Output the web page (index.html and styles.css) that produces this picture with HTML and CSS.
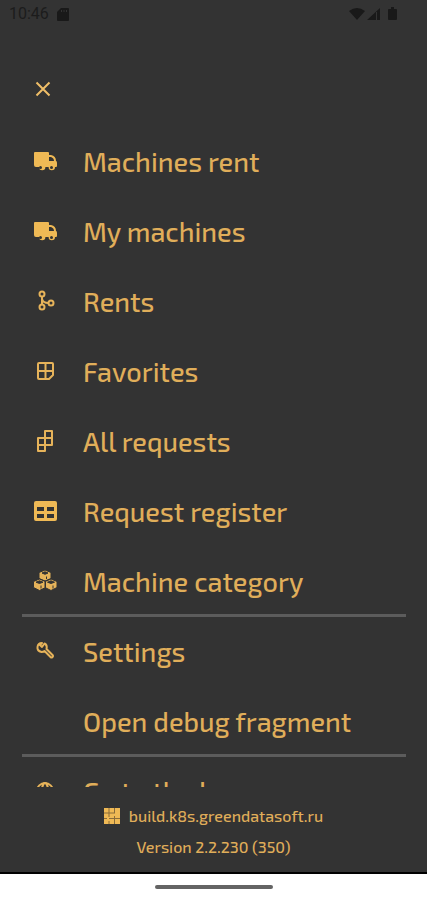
FILE: index.html
```
<!DOCTYPE html>
<html lang="en">
<head>
<meta charset="utf-8">
<meta name="viewport" content="width=device-width, initial-scale=1">
<title>Menu</title>
<link rel="stylesheet" href="styles.css">
</head>
<body>
<div class="screen">
  <header class="status">
    <span class="clock">10:46</span>
    <svg class="sd" viewBox="0 0 12 14"><path d="M4 1h7q1 0 1 1v11q0 1-1 1H1q-1 0-1-1V5z"/><path class="slot" d="M4.500 3v2M7 3v2M9.500 3v2"/></svg>
    <svg class="signals" viewBox="0 0 50 14"><path d="M0 4Q8-2 16 4L8 13zM31 1v12H18z"/><path class="slot" d="M27.500 5v8"/><path d="M40 2h2V0h3v2h2q1 0 1 1v9q0 1-1 1h-7q-1 0-1-1V3q0-1 1-1z"/></svg>
  </header>
  <button class="close" type="button" aria-label="Close menu">
    <svg viewBox="0 0 16 16"><path d="M1.500 1.500l13 13M14.500 1.500l-13 13"/></svg>
  </button>
  <nav class="menu">
    <ul class="group">
      <li><a class="item" href="#"><svg class="icon solid" viewBox="0 0 24 24"><path fill-rule="evenodd" d="M2 3h13q1 0 1 1v2h2q5 1 5 6 1 0 1 2v3q0 1-1 1h-1a3.200 3.200 0 0 1-6.400 0h-3.200a3.200 3.200 0 0 1-6.400 0H3q-2 0-2-2V4q0-1 1-1zM16 8v4h5q0-3-3-4zM6 18.500a1.500 1.500 0 1 0 3 0a1.500 1.500 0 1 0-3 0M17 18.500a1.500 1.500 0 1 0 3 0a1.500 1.500 0 1 0-3 0"/></svg><span>Machines rent</span></a></li>
      <li><a class="item" href="#"><svg class="icon solid" viewBox="0 0 24 24"><path fill-rule="evenodd" d="M2 3h13q1 0 1 1v2h2q5 1 5 6 1 0 1 2v3q0 1-1 1h-1a3.200 3.200 0 0 1-6.400 0h-3.200a3.200 3.200 0 0 1-6.400 0H3q-2 0-2-2V4q0-1 1-1zM16 8v4h5q0-3-3-4zM6 18.500a1.500 1.500 0 1 0 3 0a1.500 1.500 0 1 0-3 0M17 18.500a1.500 1.500 0 1 0 3 0a1.500 1.500 0 1 0-3 0"/></svg><span>My machines</span></a></li>
      <li><a class="item" href="#"><svg class="icon" viewBox="0 0 24 24"><circle cx="9" cy="5" r="2.500"/><circle cx="9" cy="18" r="2.500"/><circle cx="18" cy="14" r="2.500"/><path d="M9 7.500v8M9 10q1 4 6.500 4"/></svg><span>Rents</span></a></li>
      <li><a class="item" href="#"><svg class="icon" viewBox="0 0 24 24"><path d="M6 4h13q1 0 1 1v11l-4 4H6q-1 0-1-1V5q0-1 1-1zM12.500 4v16M5 12h15"/></svg><span>Favorites</span></a></li>
      <li><a class="item" href="#"><svg class="icon" viewBox="0 0 24 24"><path d="M12 2h7v14h-7zM5 9h7v13H5zM5 16h7M12 9h7"/></svg><span>All requests</span></a></li>
      <li><a class="item" href="#"><svg class="icon solid" viewBox="0 0 24 24"><path fill-rule="evenodd" d="M3 2h19q2 0 2 2v16q0 2-2 2H3q-2 0-2-2V4q0-2 2-2zM4 8v4h7V8zM14 8v4h7V8zM4 15v4h7v-4zM14 15v4h7v-4z"/></svg><span>Request register</span></a></li>
      <li><a class="item" href="#"><svg class="icon cubes" viewBox="0 0 24 24"><path d="M12 1l6 2.500v6L12 12 6 9.500v-6zM6.500 10l6 2.500v6l-6 3-6-3v-6zM18 10l6 2.500v6l-6 3-6-3v-6z"/><path class="edge" d="M9 4l3 1.300L15 4l-3-1.200zM3 13.200l3.500 1.300 3.500-1.300-3.500-1.400zM14.500 13.200l3.500 1.300 3.500-1.300-3.500-1.400zM13.500 10V7.500M8 19.500v-3M20 19.500v-3"/></svg><span>Machine category</span></a></li>
    </ul>
    <ul class="group">
      <li><a class="item" href="#"><svg class="icon" viewBox="0 0 24 24"><path d="M9 4Q5 4 4.500 8t4 5q2 0 3-1l6 6q1 1 2 0t0-2l-6-6q1-4-2-5.500L9 8 7 6z"/></svg><span>Settings</span></a></li>
      <li><a class="item" href="#"><span class="icon"></span><span>Open debug fragment</span></a></li>
    </ul>
    <ul class="group">
      <li><a class="item" href="#"><svg class="icon" viewBox="0 0 24 24"><circle cx="12" cy="12" r="8"/><ellipse cx="12" cy="12" rx="3" ry="8"/><path d="M4 12h16"/></svg><span>Go to the browser</span></a></li>
    </ul>
  </nav>
  <footer class="about">
    <p class="host"><svg class="grid" viewBox="0 0 16 16"><path class="tile" d="M0 0h16v16H0z"/><path class="lines" d="M5 0v9M10.500 0v5M0 5h11M5 10.500h11M5 13v3M10.500 8v8M0 10.500h3"/></svg><span>build.k8s.greendatasoft.ru</span></p>
    <p>Version 2.2.230 (350)</p>
  </footer>
  <div class="system"><span class="handle"></span></div>
</div>
</body>
</html>
```
FILE: styles.css
```
* { box-sizing: border-box; }
body {
  margin: 0;
  background: #333;
  color: #e0ae5a;
  font-family: "Exo 2", "Noto Sans", sans-serif;
  font-weight: 500;
}
.screen {
  height: 100vh;
  display: flex;
  flex-direction: column;
}
.status {
  display: flex;
  align-items: center;
  gap: 8px;
  height: 28px;
  padding: 0 28px 0 9px;
  color: #1c1c1c;
  font: 16px/28px Roboto, sans-serif;
  flex: none;
}
.status svg { fill: #191919; }
.status .slot { stroke: #333; fill: none; }
.sd { width: 12px; height: 14px; }
.signals { width: 50px; height: 14px; margin-left: auto; }
.close {
  flex: none;
  width: 48px;
  height: 48px;
  margin: 37px 0 13px 19px;
  padding: 16px;
  border: 0;
  background: none;
}
.close svg {
  display: block;
  width: 16px;
  height: 16px;
  fill: none;
  stroke: #efbe68;
  stroke-width: 2;
}
.menu {
  flex: 1;
  min-height: 0;
  overflow: hidden;
  padding: 0 21px 0 22px;
}
.group {
  list-style: none;
  margin: 0;
  padding: 0;
}
.group + .group {
  position: relative;
}
.group + .group::before {
  content: "";
  position: absolute;
  top: -2px;
  left: 0;
  right: 0;
  height: 3px;
  background: #5c5c5c;
}
.item {
  display: flex;
  align-items: center;
  gap: 26px;
  height: 70px;
  padding-left: 11px;
  color: inherit;
  font-size: 27px;
  line-height: 36px;
  text-decoration: none;
  white-space: nowrap;
}
.icon {
  flex: none;
  width: 24px;
  height: 24px;
  fill: none;
  stroke: #e6b35a;
  stroke-width: 2;
  stroke-linejoin: round;
}
.solid { fill: #efb955; stroke: none; }
.cubes { fill: #e6b35a; stroke: #333; stroke-width: 1; }
.edge { fill: #333; stroke: #333; stroke-width: 1; }
.about {
  flex: none;
  padding: 13px 0 10px;
  font-size: 16px;
  line-height: 31px;
  text-align: center;
}
.about p { margin: 0; }
.host {
  display: flex;
  justify-content: center;
  align-items: center;
  gap: 9px;
}
.grid { width: 16px; height: 16px; }
.tile { fill: #efb955; }
.lines { fill: none; stroke: #8a6c3a; }
.system {
  flex: none;
  height: 28px;
  display: flex;
  justify-content: center;
  align-items: center;
  border-top: 2px solid #000;
  background: #fff;
}
.handle {
  width: 118px;
  height: 4px;
  border-radius: 2px;
  background: #646464;
}
```
